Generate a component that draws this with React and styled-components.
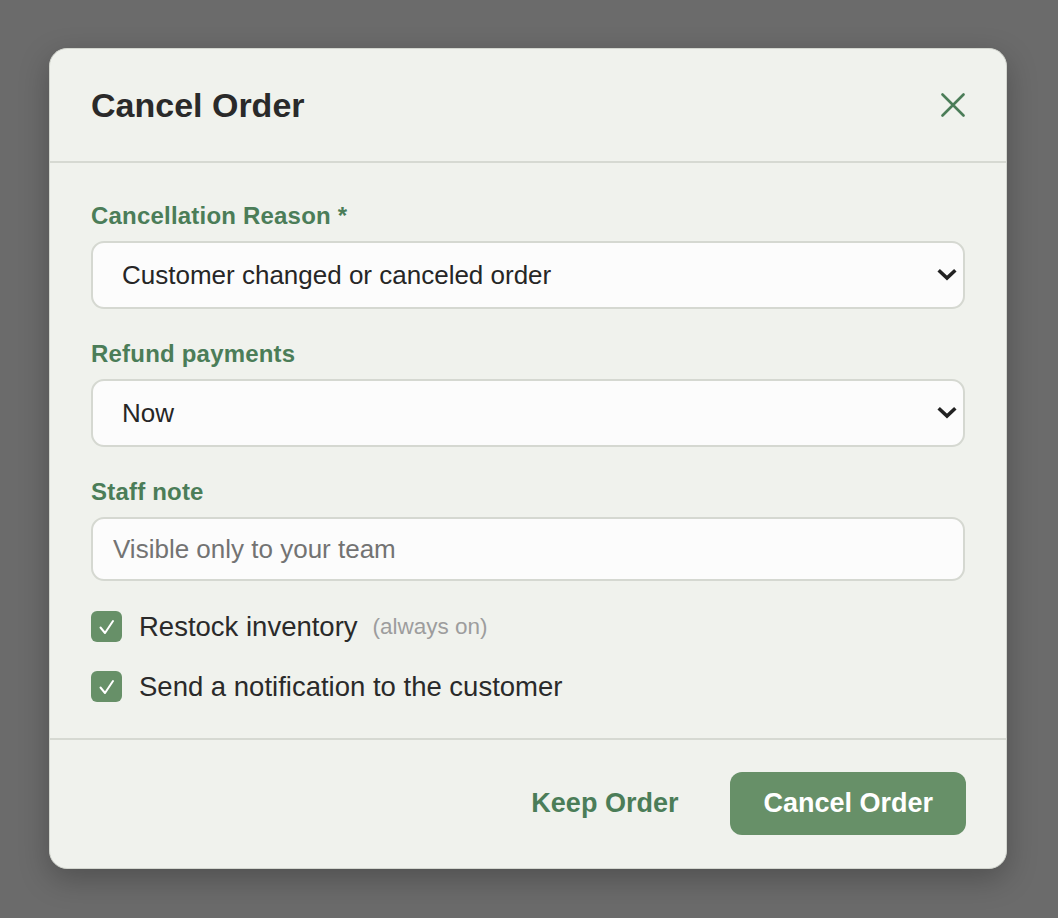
import React from "react";
import styled, { createGlobalStyle } from "styled-components";

const GlobalStyle = createGlobalStyle`
  html, body {
    margin: 0;
    padding: 0;
    background: #6b6b6b;
    font-family: "Liberation Sans", Arial, sans-serif;
  }
  * {
    box-sizing: border-box;
  }
`;

const Page = styled.div`
  min-height: 918px;
  padding: 48px 0 0 49px;
`;

const Dialog = styled.div`
  width: 958px;
  height: 821px;
  background: #f0f2ed;
  border: 1px solid #d3d6cf;
  border-radius: 18px;
  box-shadow: 0 10px 30px rgba(0, 0, 0, 0.25);
  display: flex;
  flex-direction: column;
  overflow: hidden;
`;

const Header = styled.div`
  height: 114px;
  padding: 0 41px;
  display: flex;
  align-items: center;
  justify-content: space-between;
  border-bottom: 2px solid #d6d9d2;
`;

const Title = styled.h2`
  margin: 0;
  font-size: 34px;
  font-weight: 700;
  color: #2a2a2a;
`;

const CloseButton = styled.button`
  border: none;
  background: none;
  padding: 0;
  width: 24px;
  height: 24px;
  display: flex;
  cursor: pointer;
  color: #4b7d58;
`;

const Body = styled.div`
  flex: 1;
  padding: 38px 41px 0;
  display: flex;
  flex-direction: column;
`;

const Field = styled.div`
  display: flex;
  flex-direction: column;
  gap: 10px;
  margin-bottom: 30px;
`;

const Label = styled.label`
  font-size: 24px;
  line-height: 30px;
  font-weight: 700;
  letter-spacing: 0.2px;
  color: #4b7d58;
`;

const SelectWrap = styled.div`
  position: relative;
  height: 68px;
`;

const Select = styled.select`
  appearance: none;
  width: 100%;
  height: 100%;
  padding: 0 50px 0 29px;
  font-family: inherit;
  font-size: 26px;
  color: #262626;
  background: #fcfcfc;
  border: 2px solid #d5d8d1;
  border-radius: 13px;
  outline: none;
`;

const Chevron = styled.svg`
  position: absolute;
  right: 8px;
  top: 50%;
  transform: translateY(-50%);
  pointer-events: none;
`;

const TextInput = styled.input`
  height: 64px;
  padding: 0 20px;
  font-family: inherit;
  font-size: 26px;
  color: #262626;
  background: #fcfcfc;
  border: 2px solid #d5d8d1;
  border-radius: 13px;
  outline: none;

  &::placeholder {
    color: #737373;
  }
`;

const CheckRow = styled.label`
  display: flex;
  align-items: center;
  height: 31px;
  margin-bottom: ${(p) => (p.$last ? "0" : "29px")};
  font-size: 27.5px;
  color: #2a2a2a;
`;

const Box = styled.span`
  width: 31px;
  height: 31px;
  border-radius: 6px;
  background: #679068;
  display: flex;
  align-items: center;
  justify-content: center;
  margin-right: 17px;
  flex-shrink: 0;
`;

const Hint = styled.span`
  margin-left: 15px;
  font-size: 22.5px;
  color: #9d9d9d;
`;

const Footer = styled.div`
  border-top: 2px solid #d6d9d2;
  padding: 32px 40px 0;
  height: 130px;
  display: flex;
  justify-content: flex-end;
  align-items: flex-start;
  gap: 52px;
`;

const Button = styled.button`
  height: 63px;
  padding: 0 ${(p) => (p.$primary ? "33px" : "0")};
  border: none;
  border-radius: 12px;
  font-family: inherit;
  font-size: 27px;
  font-weight: 700;
  cursor: pointer;
  background: ${(p) => (p.$primary ? "#679068" : "transparent")};
  color: ${(p) => (p.$primary ? "#ffffff" : "#4b7d58")};
`;

function ChevronIcon() {
  return (
    <Chevron width="20" height="14" viewBox="0 0 20 14">
      <path
        d="M3 3.5 L10 10 L17 3.5"
        fill="none"
        stroke="#222"
        strokeWidth="3.6"
        strokeLinecap="square"
      />
    </Chevron>
  );
}

function Check() {
  return (
    <svg width="20" height="18" viewBox="0 0 20 18">
      <path
        d="M3.5 9.5 L8 15 L16 3"
        fill="none"
        stroke="#fff"
        strokeWidth="2"
        strokeLinecap="round"
        strokeLinejoin="round"
      />
    </svg>
  );
}

export default function App() {
  return (
    <>
      <GlobalStyle />
      <Page>
        <Dialog>
          <Header>
            <Title>Cancel Order</Title>
            <CloseButton aria-label="Close">
              <svg width="24" height="24" viewBox="0 0 24 24">
                <path
                  d="M1.5 1.5 L22.5 22.5 M22.5 1.5 L1.5 22.5"
                  stroke="currentColor"
                  strokeWidth="2.6"
                  strokeLinecap="round"
                />
              </svg>
            </CloseButton>
          </Header>
          <Body>
            <Field>
              <Label>Cancellation Reason *</Label>
              <SelectWrap>
                <Select defaultValue="customer">
                  <option value="customer">Customer changed or canceled order</option>
                  <option value="fraud">Fraudulent order</option>
                  <option value="inventory">Items unavailable</option>
                  <option value="other">Other</option>
                </Select>
                <ChevronIcon />
              </SelectWrap>
            </Field>
            <Field>
              <Label>Refund payments</Label>
              <SelectWrap>
                <Select defaultValue="now">
                  <option value="now">Now</option>
                  <option value="later">Later</option>
                </Select>
                <ChevronIcon />
              </SelectWrap>
            </Field>
            <Field>
              <Label>Staff note</Label>
              <TextInput placeholder="Visible only to your team" />
            </Field>
            <CheckRow>
              <Box>
                <Check />
              </Box>
              Restock inventory
              <Hint>(always on)</Hint>
            </CheckRow>
            <CheckRow $last>
              <Box>
                <Check />
              </Box>
              Send a notification to the customer
            </CheckRow>
          </Body>
          <Footer>
            <Button>Keep Order</Button>
            <Button $primary>Cancel Order</Button>
          </Footer>
        </Dialog>
      </Page>
    </>
  );
}
